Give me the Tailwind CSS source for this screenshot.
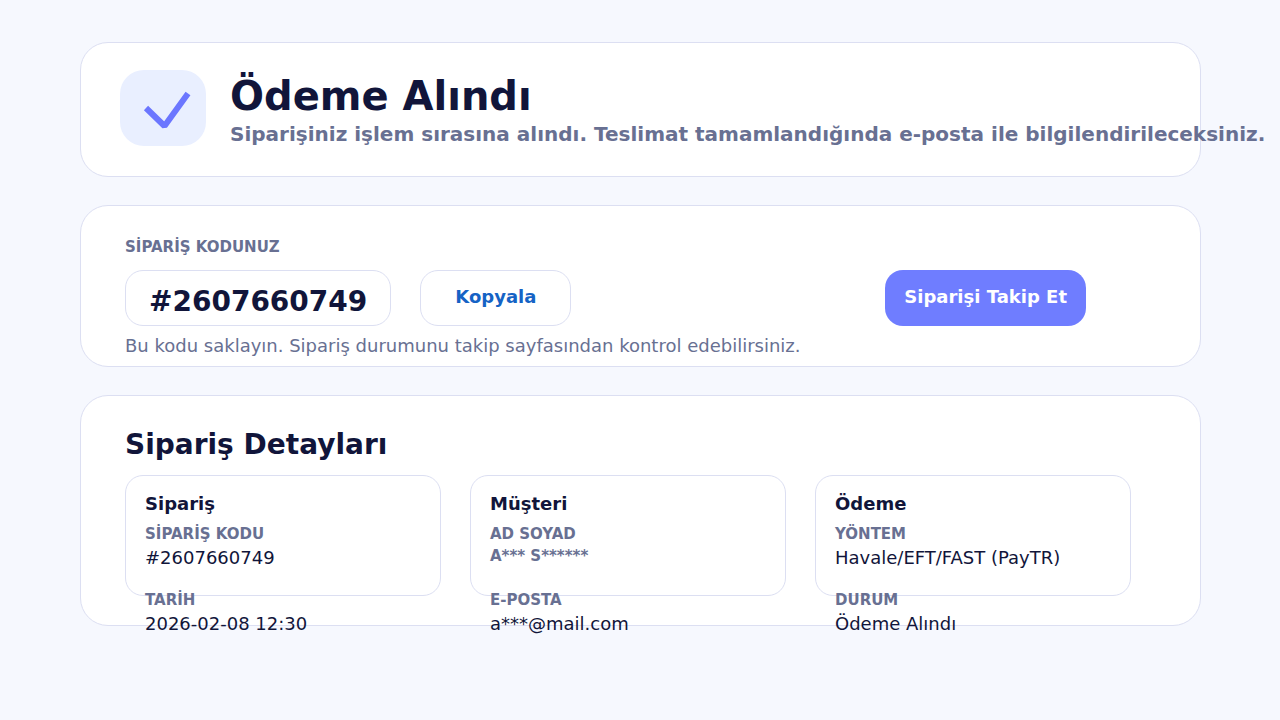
<!DOCTYPE html>
<html lang="tr">
<head>
    <meta charset="UTF-8">
    <meta name="viewport" content="width=device-width, initial-scale=1.0">
    <title>Ödeme Alındı</title>
    <script src="https://cdn.jsdelivr.net/npm/@tailwindcss/browser@4"></script>
</head>
<body class="bg-[#f6f8fe] min-h-screen overflow-x-hidden pt-[42px] pr-[79px] pb-20 pl-20 font-['DejaVu_Sans',sans-serif] text-[#11153a]">
    <main class="flex flex-col gap-7">
        <!-- Status header -->
        <header class="flex items-center gap-6 rounded-[28px] border border-[#dcdff2] bg-white pt-[27px] pr-10 pb-[30px] pl-[39px]">
            <div class="h-[76px] w-[86px] shrink-0 rounded-3xl bg-[#e9efff]">
                <svg class="h-full w-full" viewBox="0 0 86 76" fill="none" stroke="#6b76ff" stroke-width="6" stroke-linejoin="bevel" aria-hidden="true">
                    <path d="M26 38L44.5 56L68 23.5" />
                </svg>
            </div>
            <div class="min-w-0 whitespace-nowrap font-bold">
                <h1 class="text-[40px] leading-[52px]">Ödeme Alındı</h1>
                <p class="text-xl leading-6 text-[#687092]">Siparişiniz işlem sırasına alındı. Teslimat tamamlandığında e-posta ile bilgilendirileceksiniz.</p>
            </div>
        </header>

        <!-- Order code -->
        <section class="rounded-[28px] border border-[#dcdff2] bg-white pt-[31px] pr-[114px] pb-2 pl-11">
            <h2 class="text-[15px] leading-5 font-bold text-[#687092]">SİPARİŞ KODUNUZ</h2>
            <div class="mt-[13px] flex items-stretch">
                <div id="orderCode" class="rounded-[18px] border border-[#dcdff2] px-[23px] pt-[13px] pb-[5px] text-[28px] leading-9 font-bold">#2607660749</div>
                <button id="copyBtn" type="button" class="ml-[29px] rounded-[18px] border border-[#dcdff2] px-[34px] pb-0.5 text-lg font-bold text-[#1563c5]">Kopyala</button>
                <a href="#" class="ml-auto flex items-center rounded-[18px] bg-[#6f7dff] px-[19px] pb-0.5 text-lg font-bold text-white">Siparişi Takip Et</a>
            </div>
            <p class="mt-2 text-lg leading-6 text-[#687092]">Bu kodu saklayın. Sipariş durumunu takip sayfasından kontrol edebilirsiniz.</p>
        </section>

        <!-- Order details -->
        <section class="rounded-[28px] border border-[#dcdff2] bg-white pt-[31px] pr-[69px] pb-[29px] pl-11">
            <h2 class="text-[28px] leading-9 font-bold">Sipariş Detayları</h2>
            <div class="mt-3 grid grid-cols-3 gap-[29px]">
                <article class="h-[121px] rounded-[18px] border border-[#dcdff2] px-[19px] pt-4">
                    <h3 class="text-lg leading-6 font-bold">Sipariş</h3>
                    <dl class="mt-2 text-lg leading-6">
                        <dt class="text-[15px] leading-5 font-bold text-[#687092]">SİPARİŞ KODU</dt>
                        <dd class="mt-0.5 mb-5">#2607660749</dd>
                        <dt class="text-[15px] leading-5 font-bold text-[#687092]">TARİH</dt>
                        <dd class="mt-0.5">2026-02-08 12:30</dd>
                    </dl>
                </article>
                <article class="h-[121px] rounded-[18px] border border-[#dcdff2] px-[19px] pt-4">
                    <h3 class="text-lg leading-6 font-bold">Müşteri</h3>
                    <dl class="mt-2 text-lg leading-6">
                        <dt class="text-[15px] leading-5 font-bold text-[#687092]">AD SOYAD</dt>
                        <dd class="mt-0.5 mb-6 text-[15px] leading-5 font-bold text-[#687092]">A*** S******</dd>
                        <dt class="text-[15px] leading-5 font-bold text-[#687092]">E-POSTA</dt>
                        <dd class="mt-0.5">a***@mail.com</dd>
                    </dl>
                </article>
                <article class="h-[121px] rounded-[18px] border border-[#dcdff2] px-[19px] pt-4">
                    <h3 class="text-lg leading-6 font-bold">Ödeme</h3>
                    <dl class="mt-2 text-lg leading-6">
                        <dt class="text-[15px] leading-5 font-bold text-[#687092]">YÖNTEM</dt>
                        <dd class="mt-0.5 mb-5">Havale/EFT/FAST (PayTR)</dd>
                        <dt class="text-[15px] leading-5 font-bold text-[#687092]">DURUM</dt>
                        <dd class="mt-0.5">Ödeme Alındı</dd>
                    </dl>
                </article>
            </div>
        </section>
    </main>

    <script>
        const copyBtn = document.getElementById('copyBtn');
        const orderCode = document.getElementById('orderCode');

        copyBtn.addEventListener('click', () => {
            navigator.clipboard.writeText(orderCode.textContent);
        });
    </script>
</body>
</html>
